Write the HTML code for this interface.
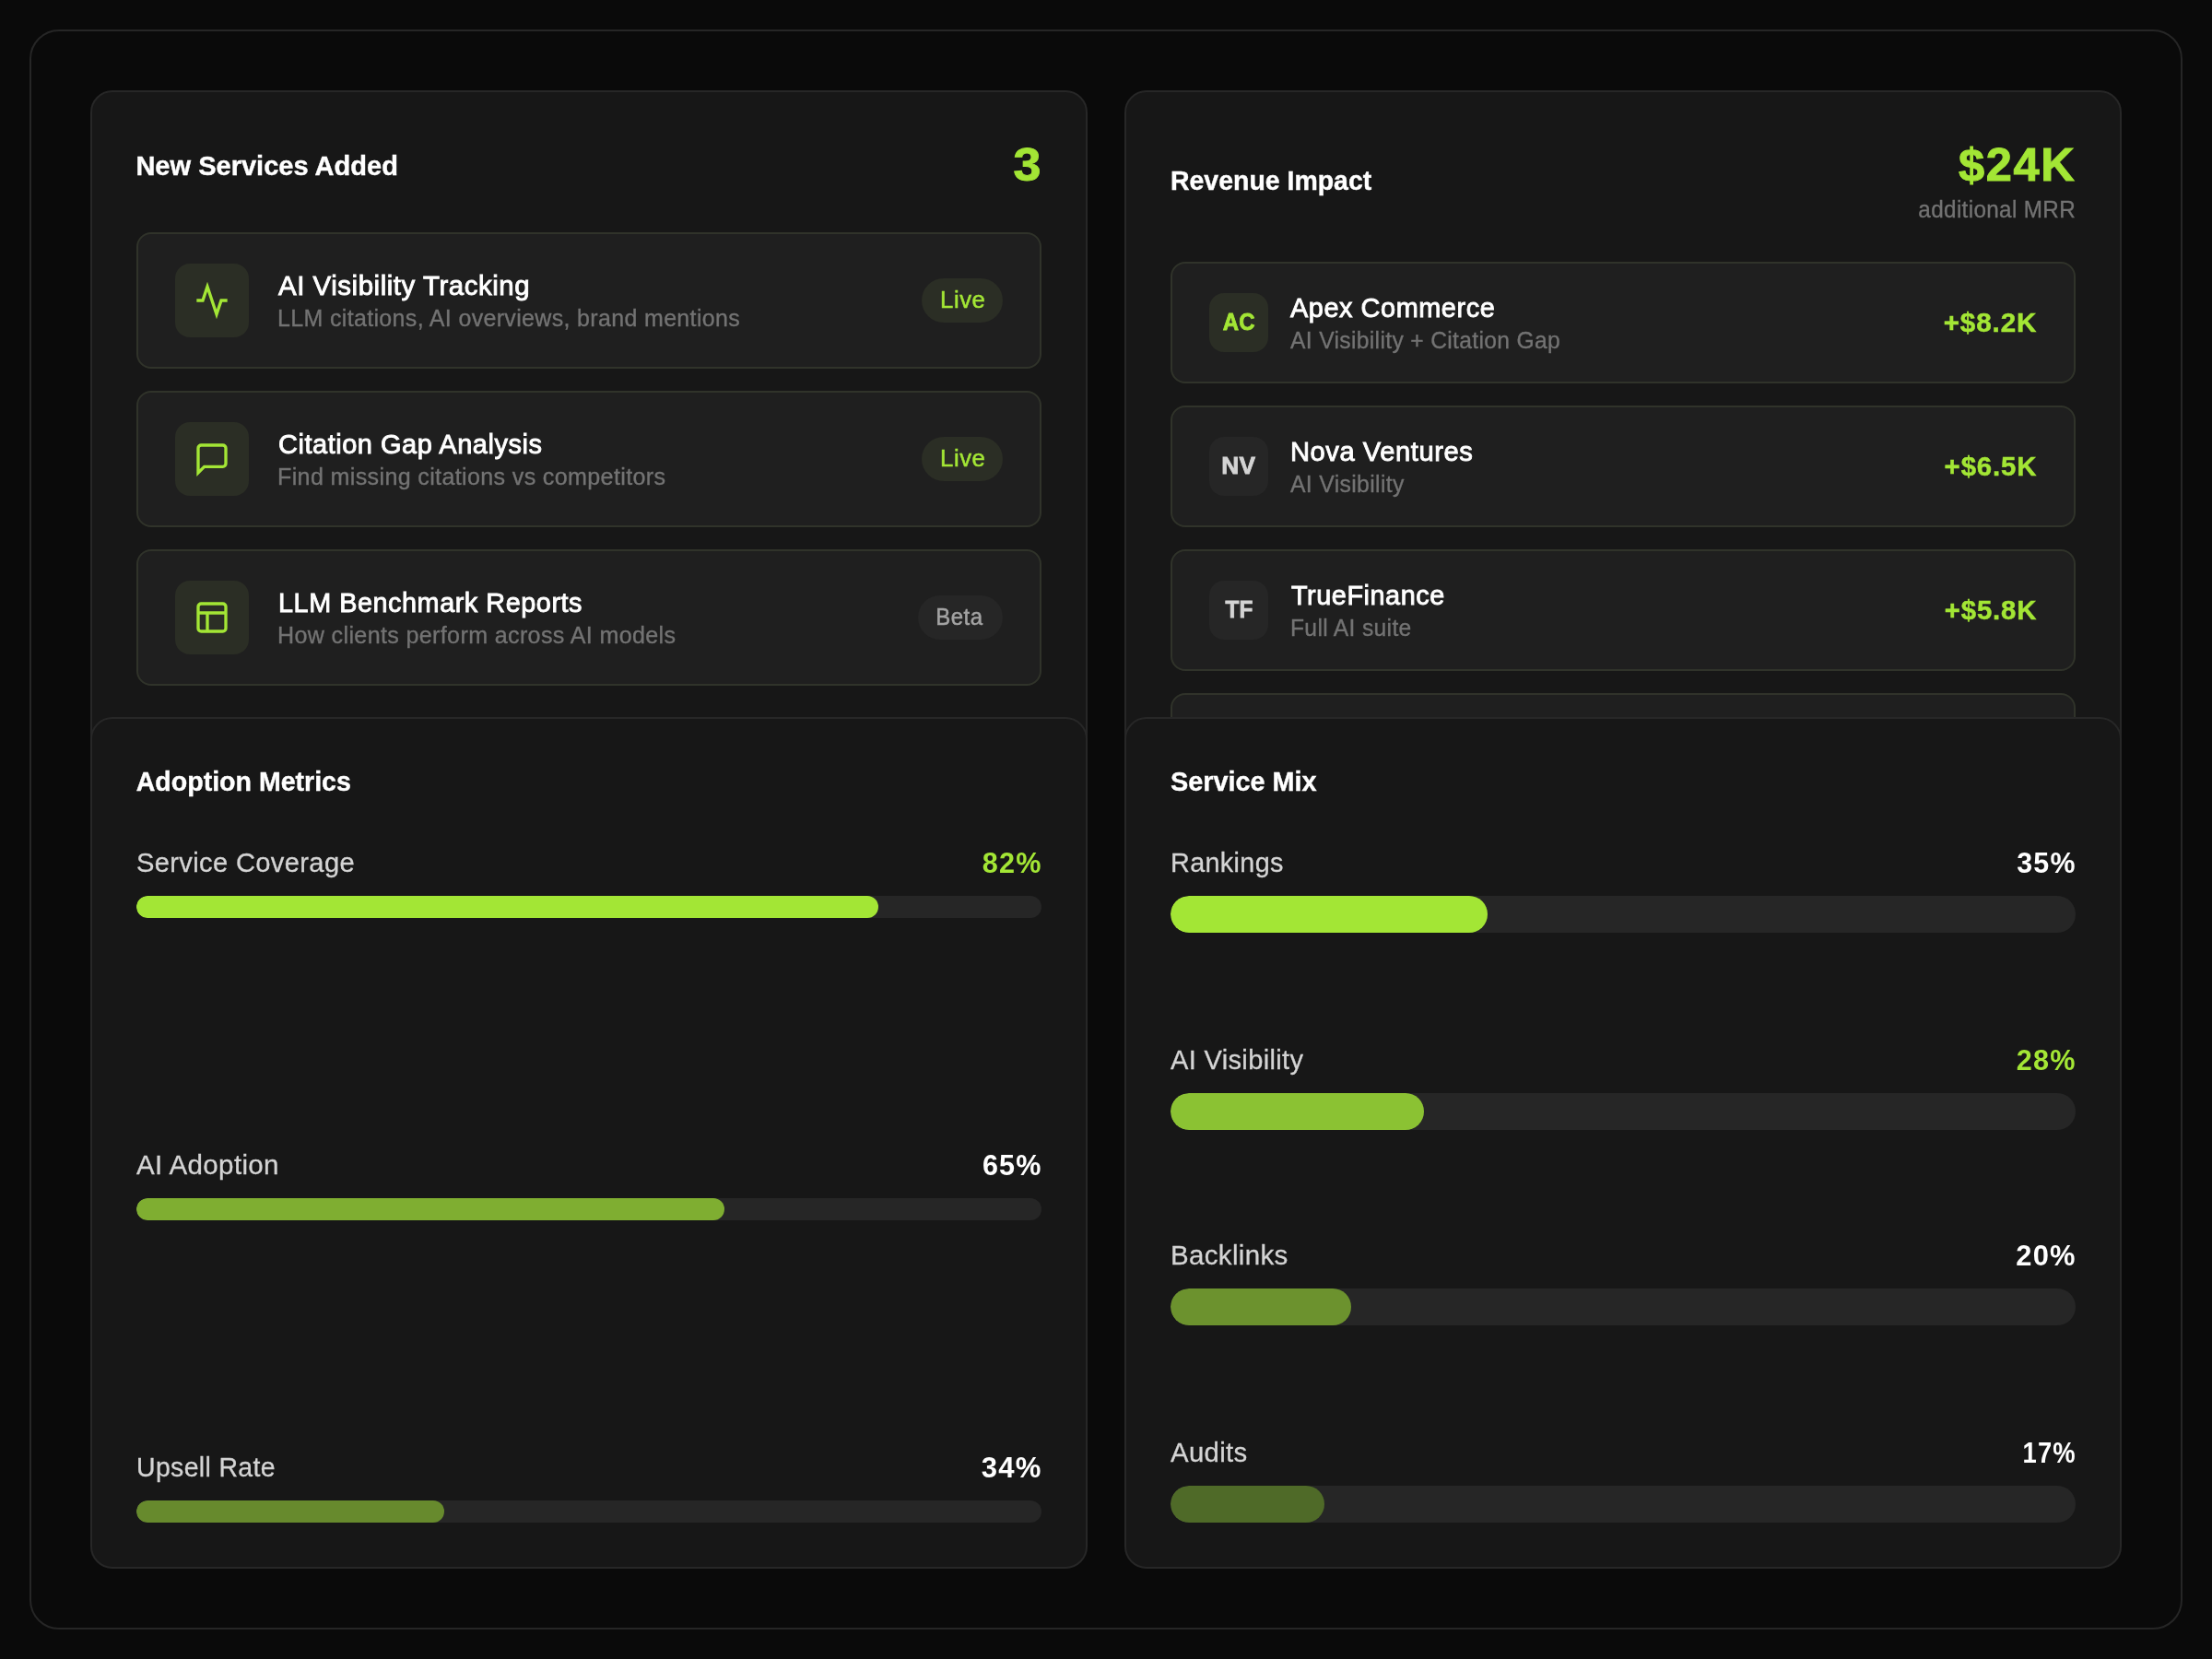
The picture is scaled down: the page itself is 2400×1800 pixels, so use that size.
<!DOCTYPE html>
<html><head><meta charset="utf-8"><title>Dashboard</title>
<style>
*{box-sizing:border-box;margin:0;padding:0}
html,body{width:2400px;height:1800px;background:#0a0a0a;overflow:hidden}
body{font-family:"Liberation Sans",sans-serif;color:#fff;position:relative}
.frame{position:absolute;left:32px;top:32px;width:2336px;height:1736px;border:2px solid #262626;border-radius:32px;background:#0a0a0a}
.card{will-change:transform;position:absolute;width:1082px;border:2px solid #272727;border-radius:24px;background:#171717;padding:48px}
.c1{left:98px;top:98px;height:760px}
.c2{left:1220px;top:98px;height:760px}
.c3{left:98px;top:778px;height:924px}
.c4{left:1220px;top:778px;height:924px}
.hd{display:flex;justify-content:space-between;align-items:center;height:64px;margin-bottom:40px}
.c2 .hd{height:96px}
.ttl{font-size:28px;font-weight:700;line-height:40px;white-space:nowrap;-webkit-text-stroke:0.4px #fff}
.big{font-size:48px;font-weight:700;line-height:64px;color:#a3e635;white-space:nowrap;text-align:right;position:relative;top:-1.5px;-webkit-text-stroke:1px #a3e635}
.mrr{font-size:24px;line-height:32px;color:#737373;text-align:right;white-space:nowrap;-webkit-text-stroke:0.35px #737373}
.item{display:flex;align-items:center;border:2px solid #30332a;border-radius:16px;background:#1f1f1f;margin-bottom:24px}
.c1 .item{height:148px;padding:0 40px}
.c2 .item{height:132px;padding:0 40px}
.ico{width:80px;height:80px;border-radius:16px;background:#2b2e25;display:flex;align-items:center;justify-content:center;margin-right:32px;flex:none}
.ico svg{width:40px;height:40px;display:block}
.av{width:64px;height:64px;border-radius:16px;background:#2b2e25;display:flex;align-items:center;justify-content:center;margin-right:24px;flex:none;font-size:24px;font-weight:700;color:#a3e635;white-space:nowrap;-webkit-text-stroke:0.8px #a3e635}
.av.g{background:#262626;color:#d4d4d4;-webkit-text-stroke:0.8px #d4d4d4}
.tx{flex:1;min-width:0}
.nm{font-size:28px;line-height:40px;font-weight:400;color:#fff;white-space:nowrap;-webkit-text-stroke:0.9px #fff}
.sb{font-size:24px;line-height:32px;color:#737373;white-space:nowrap;-webkit-text-stroke:0.35px #737373}
.bdg{height:48px;width:88px;text-align:center;border-radius:24px;background:#2b2e25;color:#a3e635;font-size:24px;line-height:48px;padding:0;white-space:nowrap;-webkit-text-stroke:0.5px #a3e635}
.bdg.b{width:92px;background:#262626;color:#a3a3a3;-webkit-text-stroke:0.5px #a3a3a3}
.amt{font-size:28px;font-weight:700;color:#a3e635;white-space:nowrap;-webkit-text-stroke:0.5px #a3e635}
.st{height:40px;margin-bottom:48px}
.rows{display:flex;flex-direction:column;justify-content:space-between;height:736px}
.lbl{display:flex;justify-content:space-between;height:40px;line-height:40px;font-size:28px;color:#d4d4d4;margin-bottom:16px;white-space:nowrap}
.lbl b{font-weight:700;color:#fff;display:inline-block}
.lbl span{display:inline-block;-webkit-text-stroke:0.3px #d4d4d4}
.bdg span,.av span{display:inline-block}
.lbl b.gr{color:#a3e635}
.trk{background:#262626;border-radius:999px;overflow:hidden}
.c3 .trk{height:24px}
.c4 .trk{height:40px}
.c4 .rows{justify-content:flex-start}
.c4 .rows>div+div{margin-top:118px}
.c4 .rows>div:nth-child(3){margin-top:116px}
.fil{height:100%;border-radius:999px;background:#a3e635}
#t1{font-size:29.5px;letter-spacing:0.0px;transform:translate(-0.6px,0px) scaleX(0.9842);transform-origin:0 50%;}
#t2{font-size:29.5px;letter-spacing:0.0px;transform:translate(0px,0px) scaleX(0.9645);transform-origin:0 50%;}
#t3{font-size:29.5px;letter-spacing:0.0px;transform:translate(-0.3px,0px) scaleX(0.9679);transform-origin:0 50%;}
#t4{font-size:29.5px;letter-spacing:0.0px;transform:translate(0px,0px) scaleX(0.9772);transform-origin:0 50%;}
#big1{font-size:49.5px;letter-spacing:1.6px;margin-right:-1.60px;transform:translate(0px,0px) scaleX(1.0867);transform-origin:100% 50%;}
#big2{font-size:49.5px;letter-spacing:1.6px;margin-right:-0.70px;transform:translate(0px,0px) scaleX(1.0212);transform-origin:100% 50%;}
#mrr{font-size:25.2px;letter-spacing:0.35px;margin-right:-0.35px;transform:translate(0px,-1px) scaleX(0.9641);transform-origin:100% 50%;}
#n1{font-size:29.5px;letter-spacing:0.55px;transform:translate(0px,-0.5px) scaleX(0.9970);transform-origin:0 50%;}
#n2{font-size:29.5px;letter-spacing:0.55px;transform:translate(0px,-0.5px) scaleX(0.9813);transform-origin:0 50%;}
#n3{font-size:29.5px;letter-spacing:0.55px;transform:translate(0px,-0.5px) scaleX(0.9769);transform-origin:0 50%;}
#n4{font-size:29.5px;letter-spacing:0.55px;transform:translate(0px,-0.5px) scaleX(0.9798);transform-origin:0 50%;}
#n5{font-size:29.5px;letter-spacing:0.55px;transform:translate(0px,-0.5px) scaleX(0.9880);transform-origin:0 50%;}
#n6{font-size:29.5px;letter-spacing:0.55px;transform:translate(1px,-0.5px) scaleX(0.9780);transform-origin:0 50%;}
#s1{font-size:25.2px;letter-spacing:0.35px;transform:translate(-1px,-1px) scaleX(0.9914);transform-origin:0 50%;}
#s2{font-size:25.2px;letter-spacing:0.35px;transform:translate(-1px,-1px) scaleX(0.9959);transform-origin:0 50%;}
#s3{font-size:25.2px;letter-spacing:0.35px;transform:translate(-1px,-1px) scaleX(0.9964);transform-origin:0 50%;}
#s4{font-size:25.2px;letter-spacing:0.35px;transform:translate(0px,-1px) scaleX(0.9776);transform-origin:0 50%;}
#s5{font-size:25.2px;letter-spacing:0.35px;transform:translate(0px,-1px) scaleX(0.9829);transform-origin:0 50%;}
#s6{font-size:25.2px;letter-spacing:0.35px;transform:translate(0px,-1px) scaleX(0.9767);transform-origin:0 50%;}
#b1{font-size:25.2px;letter-spacing:0.5px;margin-right:-0.50px;transform:translate(0.6px,-1.5px) scaleX(1.0200);transform-origin:50% 50%;}
#b2{font-size:25.2px;letter-spacing:0.5px;margin-right:-0.50px;transform:translate(0.6px,-1.5px) scaleX(1.0200);transform-origin:50% 50%;}
#b3{font-size:25.2px;letter-spacing:0.5px;margin-right:-0.50px;transform:translate(0px,-1.5px) scaleX(0.9511);transform-origin:50% 50%;position:relative;left:-1px;}
#a1{font-size:25px;letter-spacing:0.3px;margin-right:-0.30px;transform:translate(0px,-1px) scaleX(0.9594);transform-origin:50% 50%;}
#a2{font-size:25px;letter-spacing:0.3px;margin-right:-0.30px;transform:translate(0px,-1px) scaleX(1.0489);transform-origin:50% 50%;}
#a3{font-size:25px;letter-spacing:0.3px;margin-right:-0.30px;transform:translate(0px,-1px) scaleX(0.9715);transform-origin:50% 50%;}
#m1{font-size:29.5px;letter-spacing:0.9px;margin-right:-0.10px;transform:translate(0px,0px) scaleX(1.0035);transform-origin:100% 50%;}
#m2{font-size:29.5px;letter-spacing:0.9px;margin-right:-0.10px;transform:translate(0px,0px) scaleX(0.9939);transform-origin:100% 50%;}
#m3{font-size:29.5px;letter-spacing:0.9px;margin-right:-0.10px;transform:translate(0px,0px) scaleX(0.9930);transform-origin:100% 50%;}
#l1{font-size:29.5px;letter-spacing:0.35px;transform:translate(0px,0px) scaleX(0.9871);transform-origin:0 50%;}
#l2{font-size:29.5px;letter-spacing:0.35px;transform:translate(0px,0px) scaleX(1.0009);transform-origin:0 50%;}
#l3{font-size:29.5px;letter-spacing:0.35px;transform:translate(0px,0px) scaleX(0.9652);transform-origin:0 50%;}
#l4{font-size:29.5px;letter-spacing:0.35px;transform:translate(0px,0px) scaleX(0.9757);transform-origin:0 50%;}
#l5{font-size:29.5px;letter-spacing:0.35px;transform:translate(0px,0px) scaleX(0.9840);transform-origin:0 50%;}
#l6{font-size:29.5px;letter-spacing:0.35px;transform:translate(0px,0px) scaleX(0.9990);transform-origin:0 50%;}
#l7{font-size:29.5px;letter-spacing:0.35px;transform:translate(0px,0px) scaleX(0.9940);transform-origin:0 50%;}
#p1{font-size:30.5px;letter-spacing:1.2px;margin-right:-0.50px;transform:translate(0px,0px) scaleX(1.0040);transform-origin:100% 50%;}
#p2{font-size:30.5px;letter-spacing:1.2px;margin-right:-0.50px;transform:translate(0px,0px) scaleX(1.0018);transform-origin:100% 50%;}
#p3{font-size:30.5px;letter-spacing:1.2px;margin-right:-0.50px;transform:translate(0px,0px) scaleX(1.0187);transform-origin:100% 50%;}
#p4{font-size:30.5px;letter-spacing:1.2px;margin-right:-0.50px;transform:translate(0px,0px) scaleX(0.9958);transform-origin:100% 50%;}
#p5{font-size:30.5px;letter-spacing:1.2px;margin-right:-0.50px;transform:translate(0px,0px) scaleX(1.0037);transform-origin:100% 50%;}
#p6{font-size:30.5px;letter-spacing:1.2px;margin-right:-0.50px;transform:translate(0px,0px) scaleX(1.0115);transform-origin:100% 50%;}
#p7{font-size:30.5px;letter-spacing:1.2px;margin-right:-0.50px;transform:translate(0px,0px) scaleX(0.8979);transform-origin:100% 50%;}
</style></head><body>
<div class="frame"></div>

<div class="card c1">
  <div class="hd"><div class="ttl" id="t1">New Services Added</div><div class="big" id="big1">3</div></div>
  <div class="item">
    <div class="ico"><svg viewBox="0 0 24 24" fill="none" stroke="#a3e635" stroke-width="2"><path d="M22 12h-4l-3 9L9 3l-3 9H2"/></svg></div>
    <div class="tx"><div class="nm" id="n1">AI Visibility Tracking</div><div class="sb" id="s1">LLM citations, AI overviews, brand mentions</div></div>
    <div class="bdg"><span id="b1">Live</span></div>
  </div>
  <div class="item">
    <div class="ico"><svg viewBox="0 0 24 24" fill="none" stroke="#a3e635" stroke-width="2"><path d="M21 15a2 2 0 0 1-2 2H7l-4 4V5a2 2 0 0 1 2-2h14a2 2 0 0 1 2 2z"/></svg></div>
    <div class="tx"><div class="nm" id="n2">Citation Gap Analysis</div><div class="sb" id="s2">Find missing citations vs competitors</div></div>
    <div class="bdg"><span id="b2">Live</span></div>
  </div>
  <div class="item">
    <div class="ico"><svg viewBox="0 0 24 24" fill="none" stroke="#a3e635" stroke-width="2"><rect x="3" y="3" width="18" height="18" rx="2"/><path d="M3 9h18M9 21V9"/></svg></div>
    <div class="tx"><div class="nm" id="n3">LLM Benchmark Reports</div><div class="sb" id="s3">How clients perform across AI models</div></div>
    <div class="bdg b"><span id="b3">Beta</span></div>
  </div>
</div>

<div class="card c2">
  <div class="hd"><div class="ttl" id="t2">Revenue Impact</div><div><div class="big" id="big2">$24K</div><div class="mrr" id="mrr">additional MRR</div></div></div>
  <div class="item"><div class="av"><span id="a1">AC</span></div><div class="tx"><div class="nm" id="n4">Apex Commerce</div><div class="sb" id="s4">AI Visibility + Citation Gap</div></div><div class="amt" id="m1">+$8.2K</div></div>
  <div class="item"><div class="av g"><span id="a2">NV</span></div><div class="tx"><div class="nm" id="n5">Nova Ventures</div><div class="sb" id="s5">AI Visibility</div></div><div class="amt" id="m2">+$6.5K</div></div>
  <div class="item"><div class="av g"><span id="a3">TF</span></div><div class="tx"><div class="nm" id="n6">TrueFinance</div><div class="sb" id="s6">Full AI suite</div></div><div class="amt" id="m3">+$5.8K</div></div>
  <div class="item"></div>
</div>

<div class="card c3">
  <div class="ttl st" id="t3">Adoption Metrics</div>
  <div class="rows">
    <div><div class="lbl"><span id="l1">Service Coverage</span><b class="gr" id="p1">82%</b></div><div class="trk"><div class="fil" style="width:82%"></div></div></div>
    <div><div class="lbl"><span id="l2">AI Adoption</span><b id="p2">65%</b></div><div class="trk"><div class="fil" style="width:65%;background:#7fae31"></div></div></div>
    <div><div class="lbl"><span id="l3">Upsell Rate</span><b id="p3">34%</b></div><div class="trk"><div class="fil" style="width:34%;background:#678a2d"></div></div></div>
  </div>
</div>

<div class="card c4">
  <div class="ttl st" id="t4">Service Mix</div>
  <div class="rows">
    <div><div class="lbl"><span id="l4">Rankings</span><b id="p4">35%</b></div><div class="trk"><div class="fil" style="width:35%"></div></div></div>
    <div><div class="lbl"><span id="l5">AI Visibility</span><b class="gr" id="p5">28%</b></div><div class="trk"><div class="fil" style="width:28%;background:#8bc233"></div></div></div>
    <div><div class="lbl"><span id="l6">Backlinks</span><b id="p6">20%</b></div><div class="trk"><div class="fil" style="width:20%;background:#6c922e"></div></div></div>
    <div><div class="lbl"><span id="l7">Audits</span><b id="p7">17%</b></div><div class="trk"><div class="fil" style="width:17%;background:#4f6a28"></div></div></div>
  </div>
</div>
</body></html>
